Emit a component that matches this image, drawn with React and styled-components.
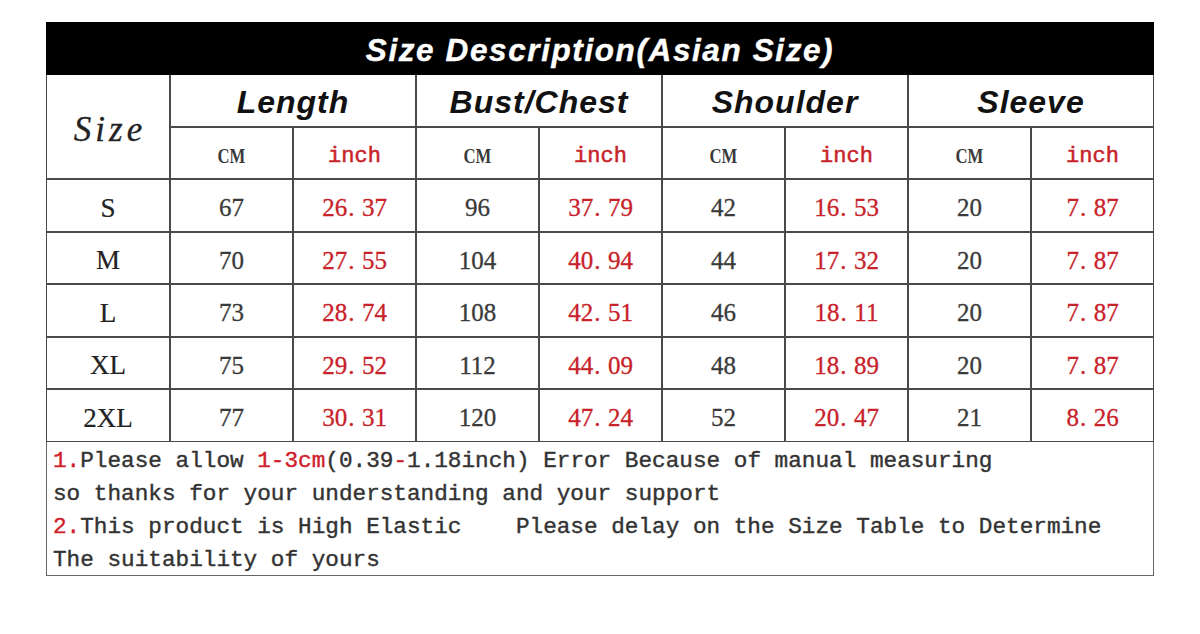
import React from "react";
import styled, { createGlobalStyle } from "styled-components";

const GlobalStyle = createGlobalStyle`
  body {
    margin: 0;
    background: #ffffff;
    font-family: "Liberation Serif", serif;
  }
`;

const Page = styled.div`
  padding: 22px 0 0 46px;
  width: 1108px;
`;

const TitleBar = styled.div`
  height: 53px;
  padding-top: 3px;
  box-sizing: border-box;
  background: #000000;
  display: flex;
  align-items: center;
  justify-content: center;
  color: #ffffff;
  font-family: "Liberation Sans", Arial, sans-serif;
  font-weight: bold;
  font-style: italic;
  font-size: 31.5px;
  letter-spacing: 1.6px;
  -webkit-text-stroke: 0.4px #ffffff;
`;

const Grid = styled.div`
  display: grid;
  grid-template-columns: 122px repeat(8, 121px);
  grid-auto-rows: 50.5px;
  gap: 2px;
  background: #4a4a4a;
  border: 1px solid #4a4a4a;
  border-top: none;
`;

const Cell = styled.div`
  background: #ffffff;
  display: flex;
  align-items: center;
  justify-content: center;
  box-sizing: border-box;
  padding-top: ${(p) => p.$shift ?? 6}px;
  grid-column: ${(p) => (p.$span ? `span ${p.$span}` : "auto")};
  grid-row: ${(p) => (p.$rows ? `span ${p.$rows}` : "auto")};
`;

const SizeLabel = styled.span`
  font-family: "Liberation Serif", serif;
  font-style: italic;
  font-size: 35px;
  letter-spacing: 4px;
  color: #222;
  margin-left: 4px;
  -webkit-text-stroke: 0.3px #222;
`;

const GroupTitle = styled.span`
  font-family: "Liberation Sans", Arial, sans-serif;
  font-weight: bold;
  font-style: italic;
  font-size: 32px;
  letter-spacing: 1px;
  color: #111;
`;

const Unit = styled.span`
  display: inline-block;
  font-family: "Liberation Serif", serif;
  font-weight: bold;
  font-size: 22px;
  color: #3a3a3a;
  transform: scaleX(0.76);
`;

const Inch = styled.span`
  font-family: "Liberation Mono", monospace;
  font-size: 22px;
  color: #c8222a;
  -webkit-text-stroke: 0.5px #c8222a;
`;

const RowLabel = styled.span`
  font-family: "Liberation Serif", serif;
  font-size: 27px;
  color: #222;
  -webkit-text-stroke: 0.2px #222;
`;

const Value = styled.span`
  font-family: "Liberation Serif", serif;
  font-size: 25px;
  color: ${(p) => (p.$red ? "#c8222a" : "#3a3a3a")};
  -webkit-text-stroke: 0.3px ${(p) => (p.$red ? "#c8222a" : "#3a3a3a")};
`;

const Dot = styled.span`
  display: inline-block;
  width: 0.55em;
  text-align: left;
  padding-left: 1px;
`;

const Notes = styled.div`
  border: 1px solid #666;
  border-top: none;
  height: 130px;
  padding: 3px 6px 0;
  font-family: "Liberation Mono", monospace;
  font-size: 22.7px;
  line-height: 33px;
  color: #333;
  -webkit-text-stroke: 0.4px #333;
`;

const NoteLine = styled.div`
  white-space: pre;
`;

const Red = styled.span`
  color: #d0202a;
  -webkit-text-stroke: 0.4px #d0202a;
`;

const groups = ["Length", "Bust/Chest", "Shoulder", "Sleeve"];

const rows = [
  ["S", "67", "26.37", "96", "37.79", "42", "16.53", "20", "7.87"],
  ["M", "70", "27.55", "104", "40.94", "44", "17.32", "20", "7.87"],
  ["L", "73", "28.74", "108", "42.51", "46", "18.11", "20", "7.87"],
  ["XL", "75", "29.52", "112", "44.09", "48", "18.89", "20", "7.87"],
  ["2XL", "77", "30.31", "120", "47.24", "52", "20.47", "21", "8.26"],
];

const Decimal = ({ value }) => {
  const [a, b] = value.split(".");
  return (
    <Value $red>
      {a}
      <Dot>.</Dot>
      {b}
    </Value>
  );
};

export default function App() {
  return (
    <Page>
      <GlobalStyle />
      <TitleBar>Size Description(Asian Size)</TitleBar>
      <Grid>
        <Cell $rows={2} $shift={6}>
          <SizeLabel>Size</SizeLabel>
        </Cell>
        {groups.map((g) => (
          <Cell key={g} $span={2} $shift={5}>
            <GroupTitle>{g}</GroupTitle>
          </Cell>
        ))}
        {groups.map((g) => (
          <React.Fragment key={g}>
            <Cell $shift={7}>
              <Unit>CM</Unit>
            </Cell>
            <Cell $shift={7}>
              <Inch>inch</Inch>
            </Cell>
          </React.Fragment>
        ))}
        {rows.map((r) => (
          <React.Fragment key={r[0]}>
            <Cell>
              <RowLabel>{r[0]}</RowLabel>
            </Cell>
            {r.slice(1).map((v, i) => (
              <Cell key={i}>
                {i % 2 === 1 ? <Decimal value={v} /> : <Value>{v}</Value>}
              </Cell>
            ))}
          </React.Fragment>
        ))}
      </Grid>
      <Notes>
        <NoteLine>
          <Red>1.</Red>Please allow <Red>1-3cm</Red>(0.39<Red>-</Red>1.18inch) Error Because of manual measuring
        </NoteLine>
        <NoteLine>so thanks for your understanding and your support</NoteLine>
        <NoteLine>
          <Red>2.</Red>This product is High Elastic    Please delay on the Size Table to Determine
        </NoteLine>
        <NoteLine>The suitability of yours</NoteLine>
      </Notes>
    </Page>
  );
}
